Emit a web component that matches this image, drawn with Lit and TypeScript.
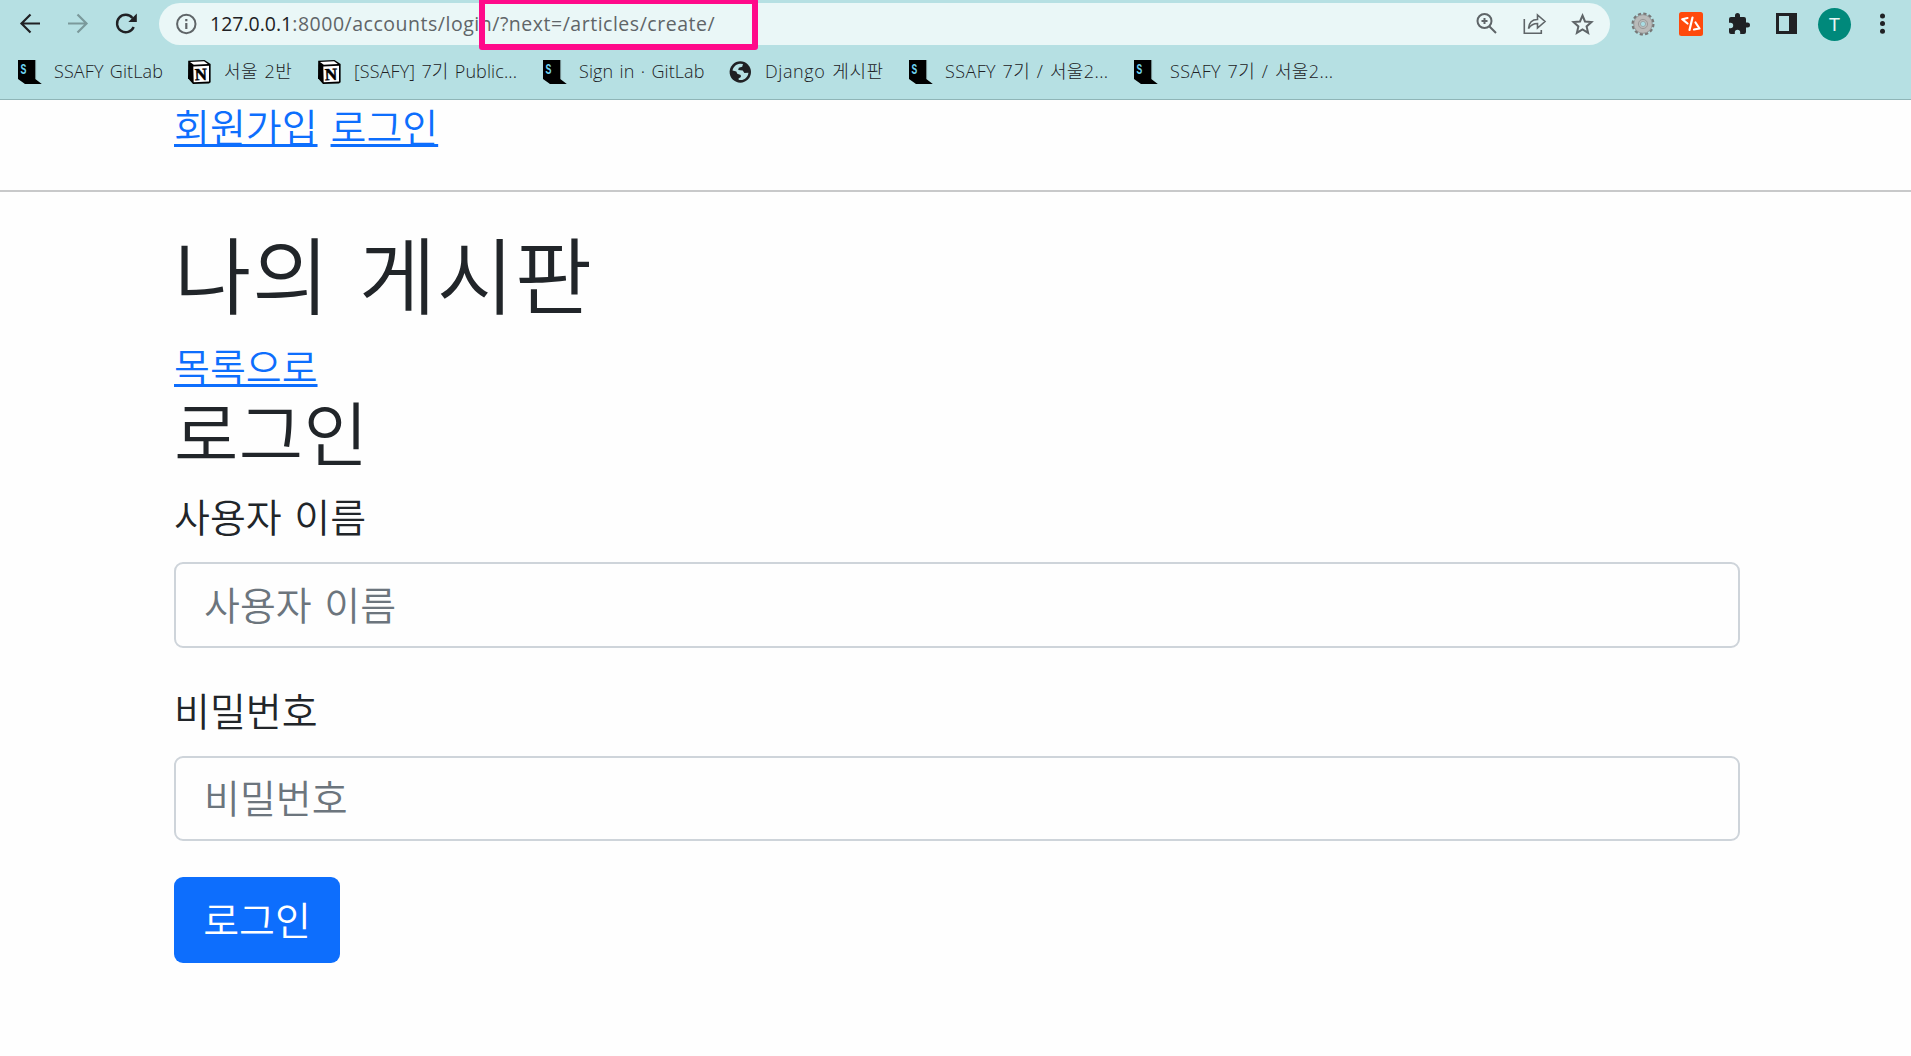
import { LitElement, html, css, svg } from "lit";
import { customElement } from "lit/decorators.js";

const ssafy = svg`<svg class="fav" viewBox="0 0 24 24" width="24" height="24"><path fill="#000" d="M0 0h17.3v19L23.8 24H7L0 19z"/><path d="M17.6 0v19" stroke="#6d8587" stroke-width=".8"/><text x="2.6" y="14" font-family="Liberation Mono" font-weight="700" font-size="14" textLength="6" lengthAdjust="spacingAndGlyphs" fill="#6fd3f2">S</text></svg>`;
const notion = svg`<svg class="fav" viewBox="0 0 24 24" width="24" height="24"><path fill="#000" d="M.2.8 16.5 0 22.600 4v18.200l-1.600 1.400L5 24 0 18.200z"/><path fill="#fff" d="M2 2.100 16 1.300 19.800 4 5.800 4.800zM5.300 6.600 21 5.800v15.600L5.700 22.300z"/><text x="6.800" y="20" font-family="Liberation Serif" font-weight="700" font-size="17" textLength="12.500" lengthAdjust="spacingAndGlyphs" stroke="#000" stroke-width=".5" transform="rotate(-2 14 14)">N</text></svg>`;
const globe = svg`<svg class="fav" viewBox="0 0 24 24" width="24" height="24"><circle cx="11.300" cy="12" r="10.700" fill="#202124"/><path fill="#b6e0e3" d="M3.500 10.500C4.200 7 7 4 11 3.700l3 .4-.8 2.600-3.400 1-.6 2.300 4.500.5 1.700 2.500 4-.2c-.2 3.500-2.800 6.300-6.200 7.100l-3.400.1-.3-1.600 2.400-1.300-.2-2.100-3.400-1.200-1-2.400z"/></svg>`;

interface Bookmark { icon: unknown; label: string; width: number; spacing: number; }
const bookmarks: Bookmark[] = [
  { icon: ssafy, label: "SSAFY GitLab", width: 170, spacing: 0.1 },
  { icon: notion, label: "서울 2반", width: 130, spacing: 0.4 },
  { icon: notion, label: "[SSAFY] 7기 Public...", width: 225, spacing: 0.1 },
  { icon: ssafy, label: "Sign in · GitLab", width: 186, spacing: 0.1 },
  { icon: globe, label: "Django 게시판", width: 180, spacing: 0.6 },
  { icon: ssafy, label: "SSAFY 7기 / 서울2...", width: 225, spacing: 0.4 },
  { icon: ssafy, label: "SSAFY 7기 / 서울2...", width: 225, spacing: 0.4 },
];

@customElement("browser-bar")
class BrowserBar extends LitElement {
  static styles = css`
    :host { display: block; height: 99px; background: #b6e0e3; border-bottom: 1px solid #8fb5b7; position: relative;
      font-family: "Open Sans", "Noto Sans CJK KR", sans-serif; font-weight: 400; color: #202124; }
    svg { display: block; flex: none; }
    .toolbar { height: 48px; display: flex; align-items: center; padding-left: 18px; box-sizing: border-box; }
    .nav { display: flex; gap: 24px; width: 141px; flex: none; }
    .omni { width: 1451px; height: 42px; border-radius: 21px; background: #eaf7f7; display: flex; align-items: center;
      box-sizing: border-box; padding: 0 15px 0 15px; flex: none; }
    .url { margin-left: 12px; font-size: 19.5px; letter-spacing: .52px; color: #5f6568; white-space: nowrap; line-height: 42px; flex: 1; }
    .host { color: #202124; letter-spacing: 0; }
    .actions { display: flex; gap: 24px; }
    .ext { display: flex; align-items: center; gap: 24px; margin-left: 21px; }
    .avatar { width: 33px; height: 33px; border-radius: 50%; background: #00897b; color: #e6f5f3; text-align: center;
      font: 19px/34px Roboto, sans-serif; margin: 0 -5px; }
    .marks { height: 48px; display: flex; align-items: center; padding-left: 18px; }
    .mark { display: flex; align-items: center; gap: 12px; font-size: 18px; font-weight: 300; line-height: 24px; white-space: nowrap; flex: none; word-spacing: 1.5px; }
    .mark span { padding-bottom: 2px; }
    .highlight { position: absolute; left: 479px; top: -2px; width: 267px; height: 40px; border: 6px solid #ff0a8a; border-radius: 3px; }
  `;
  render() {
    return html`
      <div class="toolbar">
        <div class="nav">
          <svg viewBox="0 0 24 24" width="24" height="24" fill="none" stroke="#202124" stroke-width="2.2"><path d="M22 11.500H3.500M12.500 2.500 3.500 11.500l9 9"/></svg>
          <svg viewBox="0 0 24 24" width="24" height="24" fill="none" stroke="#7b999b" stroke-width="2.2"><path d="M2 11.500h18.500M11.500 2.500l9 9-9 9"/></svg>
          <svg viewBox="0 0 24 24" width="24" height="24" fill="none" stroke="#202124" stroke-width="2.400"><path d="M19.700 15A8.700 8.700 0 1 1 18.500 6"/><path d="M22.800 1.500v8.500h-8.500z" fill="#202124" stroke="none"/></svg>
        </div>
        <div class="omni">
          <svg viewBox="0 0 24 24" width="24" height="24"><circle cx="12.300" cy="12" r="9.200" fill="none" stroke="#5f6568" stroke-width="2"/><path d="M12.300 11v6M12.300 7v2.200" stroke="#5f6568" stroke-width="2.200"/></svg>
          <div class="url"><span class="host">127.0.0.1</span>:8000/accounts/login/?next=/articles/create/</div>
          <div class="actions">
            <svg viewBox="0 0 24 24" width="24" height="24" fill="none" stroke="#5f6568" stroke-width="2"><circle cx="9.500" cy="9" r="7"/><path d="m14.500 14.500 6.500 6.500M9.500 6v6M6.500 9h6" /></svg>
            <svg viewBox="0 0 24 24" width="24" height="24" fill="none" stroke="#5f6568" stroke-width="1.600"><path d="M1.300 7v14.200h17V18M5.500 16.500c.5-6 4-9 9-9V3l7.500 6.500-7.500 6.500v-4.500c-4 0-7 2-9 5z"/></svg>
            <svg viewBox="0 0 24 24" width="24" height="24" fill="none" stroke="#5f6568" stroke-width="2"><path d="m11.500 3.500 2.500 6 6.500.6-4.900 4.300 1.500 6.400-5.600-3.400-5.600 3.400 1.500-6.400L2.500 10.100l6.500-.6z"/></svg>
          </div>
        </div>
        <div class="ext">
          <svg viewBox="0 0 24 24" width="24" height="24"><circle cx="12" cy="12" r="10.300" fill="none" stroke="#777" stroke-width="2.400" stroke-dasharray="3.200 2.190"/><circle cx="12" cy="12" r="6" fill="none" stroke="#b9bab9" stroke-width="6.500"/><circle cx="12" cy="12" r="9.300" fill="none" stroke="#8d8d8d" stroke-width=".8"/><circle cx="12" cy="12" r="4.600" fill="none" stroke="#999"/><circle cx="12" cy="12" r="2.600" fill="#a9dde4" stroke="#999" stroke-width=".8"/></svg>
          <svg viewBox="0 0 24 24" width="24" height="24"><rect width="24" height="24" rx="2.500" fill="#ff4a0c"/><path d="M8.500 6 3.200 7.200 8.500 11.500M13.500 5.500 10.500 18M16.500 10.500l4 6-5.500 1" fill="none" stroke="#fff" stroke-width="2.200" stroke-linecap="round" stroke-linejoin="round"/></svg>
          <svg viewBox="0 0 24 24" width="24" height="24" fill="#202124"><path d="M20.500 10.500H19V7a2 2 0 0 0-2-2h-4V3.500a2.500 2.500 0 0 0-5 0V5H4a2 2 0 0 0-2 2v3.800h1.500a2.700 2.700 0 0 1 0 5.400H2V20a2 2 0 0 0 2 2h3.800v-1.500a2.700 2.700 0 0 1 5.400 0V22H17a2 2 0 0 0 2-2v-4.500h1.500a2.500 2.500 0 0 0 0-5z"/></svg>
          <svg viewBox="0 0 24 24" width="24" height="24"><path fill="#202124" fill-rule="evenodd" d="M1 1h21v21H1zM4 4v15h10V4z"/></svg>
          <div class="avatar">T</div>
          <svg viewBox="0 0 24 24" width="24" height="24" fill="#202124"><circle cx="12.500" cy="4" r="2.500"/><circle cx="12.500" cy="11.600" r="2.500"/><circle cx="12.500" cy="19.200" r="2.500"/></svg>
        </div>
      </div>
      <div class="marks">
        ${bookmarks.map(b => html`<div class="mark" style="width:${b.width}px;letter-spacing:${b.spacing}px">${b.icon}<span>${b.label}</span></div>`)}
      </div>
      <div class="highlight"></div>
    `;
  }
}

@customElement("app-root")
class AppRoot extends LitElement {
  static styles = css`
    :host { display: block; height: 1056px; overflow: hidden; background: #fefefe; color: #212529;
      font-family: "Noto Sans CJK KR", sans-serif; font-weight: 350; font-size: 39px; line-height: 60px; }
    .links { box-sizing: border-box; border-bottom: 2px solid #c8c9ca; height: 92px; padding-left: 174px; display: flex; gap: 13px; line-height: 50px; }
    a { color: #0d6efd; text-decoration: underline; text-decoration-thickness: 3px; text-underline-offset: 2px; text-decoration-skip-ink: none; }
    .container { padding: 30px 171px 0 174px; }
    h1 { margin: 0; font-size: 84px; letter-spacing: .8px; line-height: 100px; font-weight: 350; word-spacing: 9px; }
    .back { display: block; margin-top: 16px; line-height: 54px; width: max-content; }
    h2 { margin: 0; font-size: 70px; letter-spacing: .3px; line-height: 78px; font-weight: 350; }
    label { display: block; word-spacing: 4px; margin-top: 15px; height: 60px; }
    input { display: block; width: 100%; box-sizing: border-box; height: 86px; border: 2px solid #ced4da; border-radius: 9px;
      padding: 0 28px 4px 28px; background: #fefefe; font: inherit; word-spacing: 4px; margin-top: 17px; }
    input::placeholder { color: #6c757d; opacity: 1; }
    .second { margin-top: 31px; }
    .second + input { height: 85px; padding-bottom: 5px; }
    button { display: block; margin-top: 36px; width: 166px; height: 86px; border: 0; border-radius: 9px; background: #0d6efd; color: #fff; font: inherit; padding: 0 0 5px; }
  `;
  render() {
    return html`
      <browser-bar></browser-bar>
      <nav class="links"><a>회원가입</a><a>로그인</a></nav>
      <main class="container">
        <h1>나의 게시판</h1>
        <a class="back">목록으로</a>
        <h2>로그인</h2>
        <label>사용자 이름</label>
        <input placeholder="사용자 이름">
        <label class="second">비밀번호</label>
        <input placeholder="비밀번호">
        <button>로그인</button>
      </main>
    `;
  }
}
